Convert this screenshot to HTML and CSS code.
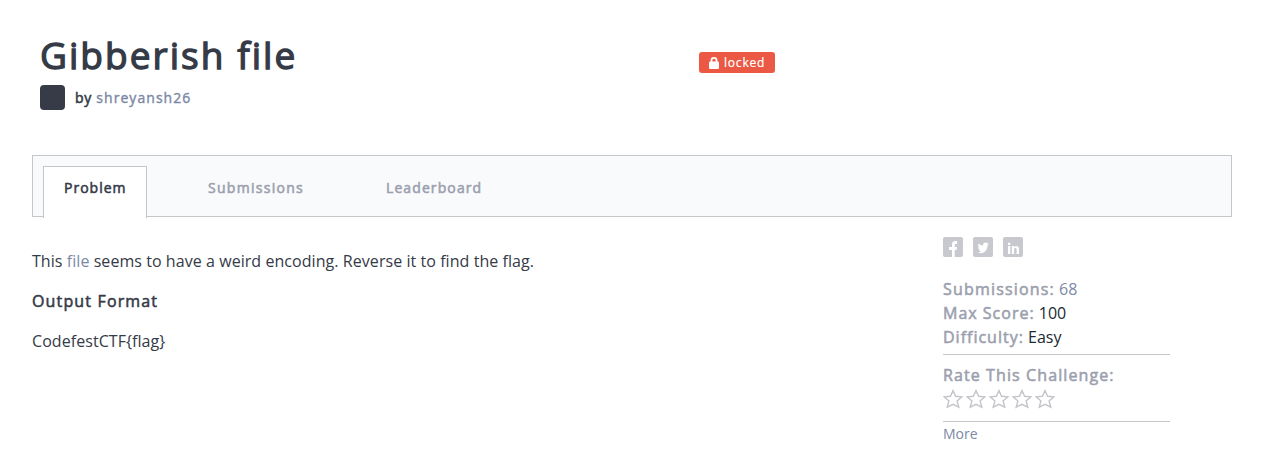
FILE: index.html
```html
<!DOCTYPE html>
<html lang="en">
<head>
<meta charset="utf-8">
<title>Gibberish file</title>
<link rel="stylesheet" href="styles.css">
</head>
<body>
<svg class="defs" width="0" height="0" aria-hidden="true">
  <symbol id="star" viewBox="0 0 20 20"><path d="M10 1.6l2.6 5.7 6.2.5-4.7 4.1 1.7 6.3-5.8-2.8-5.8 2.8 1.7-6.3-4.7-4.1 6.2-.5z" fill="none" stroke="currentColor" stroke-width="1.4"/></symbol>
</svg>
<header class="header">
  <div class="heading">
    <h1 class="title strong">Gibberish file</h1>
    <div class="author"><span class="avatar"></span><span class="by strong">by <a class="link user">shreyansh26</a></span></div>
  </div>
  <span class="locked">
    <svg width="10" height="12" viewBox="0 0 10 12"><path d="M2.5 5V3.2a2.5 2.3 0 0 1 5 0V5" fill="none" stroke="#fff" stroke-width="1.8"/><rect y="4.5" width="10" height="7.5" rx="1" fill="#fff"/></svg>
    <span>locked</span>
  </span>
</header>
<nav class="tabs">
  <a class="tab active strong">Problem</a>
  <a class="tab submissions strong">Submissions</a>
  <a class="tab leaderboard strong">Leaderboard</a>
</nav>
<div class="content">
  <main class="problem">
    <p>This <a class="link">file</a> seems to have a weird encoding. Reverse it to find the flag.</p>
    <p class="subhead strong">Output Format</p>
    <p>CodefestCTF{flag}</p>
  </main>
  <aside class="sidebar">
    <div class="social">
      <svg width="20" height="20" viewBox="0 0 20 20"><rect width="20" height="20" rx="2" fill="#c8c9ce"/><path d="M9 20v-7H6v-3h3V7.5C9 5 10.3 4 12.5 4H14v3h-1c-1 0-1.3.4-1.3 1.2V10H14l-.4 3h-1.9v7z" fill="#fff"/></svg>
      <svg width="20" height="20" viewBox="0 0 20 20"><rect width="20" height="20" rx="2" fill="#c8c9ce"/><path d="M5.6 6.2c1.2 1.4 2.7 2.2 4.5 2.3-.3-1.8.8-3 2.3-3 .7 0 1.3.3 1.7.7l1.4-.5-.8 1.3 1.1-.3-1.2 1.2c.1 4.3-3 8.3-6.4 8.3-1.2 0-2.3-.3-3.2-.9 1.1.1 2.1-.2 2.9-.8-1-.1-1.7-.9-2-1.8h.9c-1-.4-1.6-1.4-1.6-2.5l.9.3c-.9-.8-1.1-2.4-.5-4z" fill="#fff"/></svg>
      <svg width="20" height="20" viewBox="0 0 20 20"><rect width="20" height="20" rx="2" fill="#c8c9ce"/><path d="M5 9h2.3v8H5zM5 5.8h2.3V8H5zM8.8 9H11v1.1c1.5-2 5-1.5 5 1.5V17h-2.4v-4.7c0-1.8-2.4-1.8-2.4 0V17H8.8z" fill="#fff"/></svg>
    </div>
    <div class="stats">
      <div><span class="label wide strong">Submissions:</span> <a class="link">68</a></div>
      <div><span class="label strong">Max Score:</span> <span class="value">100</span></div>
      <div><span class="label strong">Difficulty:</span> <span class="value">Easy</span></div>
    </div>
    <div class="rating">
      <div class="label rate strong">Rate This Challenge:</div>
      <div class="stars">
        <svg class="star"><use href="#star"/></svg>
        <svg class="star"><use href="#star"/></svg>
        <svg class="star"><use href="#star"/></svg>
        <svg class="star"><use href="#star"/></svg>
        <svg class="star"><use href="#star"/></svg>
      </div>
    </div>
    <a class="more link">More</a>
  </aside>
</div>
</body>
</html>
```
FILE: styles.css
```css
* { box-sizing: border-box; }
body {
  margin: 0;
  height: 452px;
  overflow: hidden;
  background: #fff;
  color: #353a47;
  font: 16px/24px "Open Sans", sans-serif;
}
.defs { display: block; }
.strong { font-weight: 400; -webkit-text-stroke: 0.55px currentColor; letter-spacing: 1px; }
.link { color: #7c89a5; }
.header { display: flex; height: 155px; padding: 32px 40px 0; }
.heading { width: 659px; }
.title { margin: 0; font-size: 37px; line-height: 45px; letter-spacing: 2.05px; -webkit-text-stroke-width: 1.3px; }
.author { display: flex; align-items: center; gap: 10px; margin-top: 8px; height: 25px; }
.avatar { width: 25px; height: 25px; border-radius: 4px; background: #363b47; }
.by { font-size: 14px; letter-spacing: 0.7px; }
.user { letter-spacing: 1.05px; -webkit-text-stroke-width: 0.4px; }
.locked {
  display: flex; align-items: center; gap: 5px;
  width: 76px; height: 21px; margin-top: 20px; padding-left: 10px;
  border-radius: 3px; background: #eb5844; color: #fff;
  font-size: 12px; line-height: 20px; letter-spacing: 0.8px;
  -webkit-text-stroke: 0.2px #fff;
}
.tabs {
  display: flex; width: 1200px; height: 62px; margin-left: 32px; padding: 10px 0 0 10px;
  border: 1px solid #c5c6ca; background: #f9fafc;
}
.tab { color: #9ba0ae; font-size: 14px; line-height: 24px; padding-top: 10px; letter-spacing: 1.1px; }
.tab.active {
  width: 104px; height: 52px; padding: 9px 20px 0; letter-spacing: 1px;
  border: 1px solid #c5c6ca; border-bottom: 0; background: #fff; color: #353a47;
}
.tab.submissions { width: 178px; margin-left: 61px; letter-spacing: 1.28px; }
.content { display: flex; padding-left: 32px; }
.problem { width: 911px; padding-top: 32px; letter-spacing: 0.06px; }
.problem p { margin: 0 0 16px; }
.subhead { letter-spacing: 1.15px; }
.sidebar { width: 227px; padding-top: 20px; }
.social { display: flex; gap: 10px; height: 40px; }
.stats { height: 78px; border-bottom: 1px solid #c5c6cb; }
.label { color: #9ba0ae; }
.wide { letter-spacing: 1.18px; }
.value { color: #202832; }
.rating { height: 67px; padding-top: 8px; border-bottom: 1px solid #c5c6cb; }
.rate { letter-spacing: 1.1px; }
.stars { display: flex; gap: 3px; margin-top: 2px; color: #c4c5ca; }
.star { width: 20px; height: 20px; }
.more { display: block; font-size: 14px; line-height: 24px; }
```
